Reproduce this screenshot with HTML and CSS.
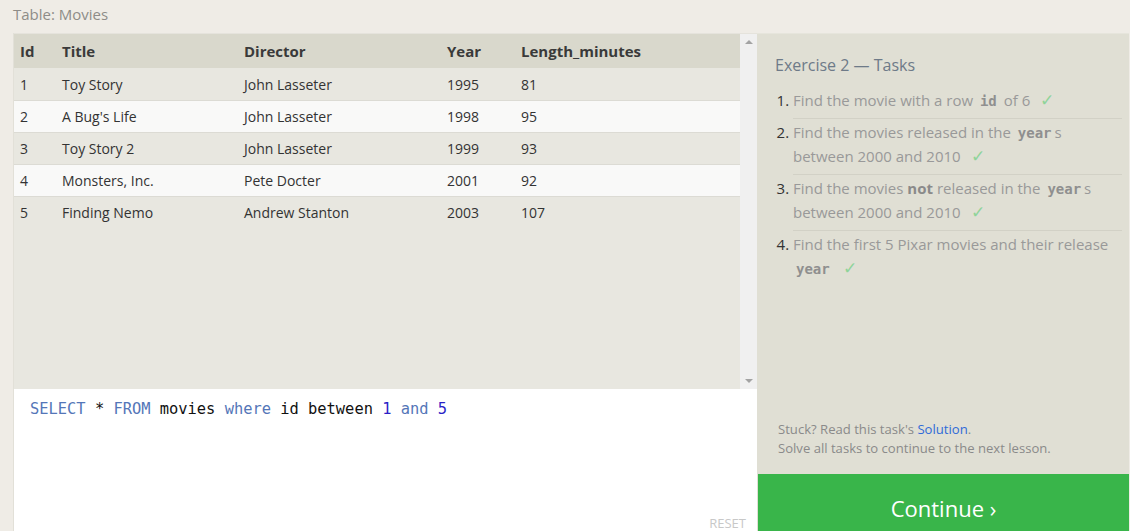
FILE: index.html
```html
<!DOCTYPE html>
<html>
<head>
<meta charset="utf-8">
<link rel="stylesheet" href="styles.css">
</head>
<body>
<div class="page">
  <div class="caption">Table: Movies</div>
  <div class="main">
    <div class="left">
      <div class="results">
        <div class="table-wrap">
          <table class="grid">
            <thead>
              <tr><th class="c-id">Id</th><th class="c-title">Title</th><th class="c-dir">Director</th><th class="c-year">Year</th><th>Length_minutes</th></tr>
            </thead>
            <tbody>
              <tr><td>1</td><td>Toy Story</td><td>John Lasseter</td><td>1995</td><td>81</td></tr>
              <tr><td>2</td><td>A Bug's Life</td><td>John Lasseter</td><td>1998</td><td>95</td></tr>
              <tr><td>3</td><td>Toy Story 2</td><td>John Lasseter</td><td>1999</td><td>93</td></tr>
              <tr><td>4</td><td>Monsters, Inc.</td><td>Pete Docter</td><td>2001</td><td>92</td></tr>
              <tr><td>5</td><td>Finding Nemo</td><td>Andrew Stanton</td><td>2003</td><td>107</td></tr>
            </tbody>
          </table>
        </div>
        <div class="scrollbar">
          <span class="arrow up"></span>
          <span class="arrow down"></span>
        </div>
      </div>
      <div class="editor">
        <div class="code"><span class="kw">SELECT</span> * <span class="kw">FROM</span> movies <span class="kw">where</span> id between <span class="num">1</span> <span class="kw">and</span> <span class="num">5</span></div>
        <div class="reset">RESET</div>
      </div>
    </div>
    <div class="right">
      <div class="tasks">
        <h3 class="tasks-title">Exercise 2 — Tasks</h3>
        <ol class="task-list">
          <li><span class="task-text">Find the movie with a row <code>id</code> of 6 <span class="check">✓</span></span></li>
          <li><span class="task-text">Find the movies released in the <code>year</code>s between 2000 and 2010 <span class="check">✓</span></span></li>
          <li><span class="task-text">Find the movies <b>not</b> released in the <code>year</code>s between 2000 and 2010 <span class="check">✓</span></span></li>
          <li class="last"><span class="task-text">Find the first 5 Pixar movies and their release <code>year</code> <span class="check">✓</span></span></li>
        </ol>
      </div>
      <div class="help">
        <div>Stuck? Read this task's <a class="link">Solution</a>.</div>
        <div>Solve all tasks to continue to the next lesson.</div>
      </div>
      <div class="continue">Continue ›</div>
    </div>
  </div>
</div>
</body>
</html>
```

FILE: styles.css
```css
* { box-sizing: border-box; }
html, body { margin: 0; padding: 0; }
body {
  background: #efece6;
  font-family: "Open Sans", "Liberation Sans", sans-serif;
  color: #333;
  width: 1130px;
  height: 531px;
  overflow: hidden;
}
.page { padding-left: 13px; }
.caption {
  height: 33px;
  padding-top: 4px;
  font-size: 15px;
  color: #8e8c88;
}
.main {
  display: flex;
  height: 498px;
}
.left {
  width: 744px;
  display: flex;
  flex-direction: column;
  border-left: 1px solid #e2e0d8;
}
.results {
  display: flex;
  height: 356px;
  background: #e8e7e0;
  border-top: 1px solid #e5e3dc;
}
.table-wrap { flex: 1; }
.grid {
  width: 100%;
  border-collapse: collapse;
  font-size: 14px;
}
.grid th {
  background: #d9d8cc;
  text-align: left;
  font-weight: 700;
  font-size: 15px;
  height: 34px;
  padding: 0 0 0 6px;
  color: #3a3a3a;
}
.grid td {
  height: 32px;
  padding: 0 0 0 6px;
  border-bottom: 1px solid #dcdbd4;
  color: #333;
}
.grid tbody tr:first-child td { padding-top: 2px; }
.grid tbody tr:nth-child(even) td { background: #f9f9f8; }
.grid tbody tr:last-child td { border-bottom: none; }
.c-id { width: 42px; }
.c-title { width: 182px; }
.c-dir { width: 203px; }
.c-year { width: 74px; }
.scrollbar {
  width: 17px;
  background: #f0f0f0;
  display: flex;
  flex-direction: column;
  justify-content: space-between;
  align-items: center;
  padding: 6px 0 6px;
}
.arrow {
  width: 0; height: 0;
  border-left: 4px solid transparent;
  border-right: 4px solid transparent;
}
.arrow.up { border-bottom: 4px solid #a3a3a3; }
.arrow.down { border-top: 4px solid #a3a3a3; }
.editor {
  flex: 1;
  background: #fff;
  position: relative;
  padding: 11px 0 0 16px;
}
.code {
  font-family: "DejaVu Sans Mono", "Liberation Mono", monospace;
  font-size: 15.4px;
  color: #111;
}
.kw { color: #5476b8; }
.num { color: #2b1fc7; }
.reset {
  position: absolute;
  right: 11px;
  bottom: -1px;
  font-size: 13px;
  color: #c8c8c8;
}
.right {
  width: 372px;
  background: #e0dfd4;
  display: flex;
  flex-direction: column;
  border-top: 1px solid #e6e5dc;
}
.tasks { flex: 1; padding: 20px 7px 0 18px; }
.tasks-title {
  margin: 0 0 11px;
  font-weight: 400;
  font-size: 16px;
  color: #6e7a88;
}
.task-list {
  margin: 0;
  padding: 0 0 0 18px;
  font-size: 15px;
  line-height: 24px;
  color: #333;
}
.task-list li {
  line-height: 24px;
  padding: 1px 0 6px;
  border-bottom: 1px solid #d2d1c6;
}
.task-list li.last { border-bottom: none; }
.task-list li::marker { color: #333; }
.task-text { color: #999; }
.task-text code {
  font-family: "DejaVu Sans Mono", "Liberation Mono", monospace;
  font-weight: 700;
  color: #8f8f8f;
  font-size: 14px;
  line-height: 1;
  margin: 0 3px;
}
.task-text b { color: #8a8a8a; }
.check { color: #8fd49a; margin-left: 6px; font-size: 17px; line-height: 1; }
.help {
  padding: 0 0 16px 21px;
  font-size: 13.1px;
  line-height: 19px;
  color: #8a8a8a;
}
.link { color: #2f6ad8; }
.continue {
  height: 57px;
  background: #39b54a;
  color: #fff;
  font-size: 22px;
  display: flex;
  align-items: center;
  justify-content: center;
  padding-top: 10px;
  margin-left: 1px;
}
```
